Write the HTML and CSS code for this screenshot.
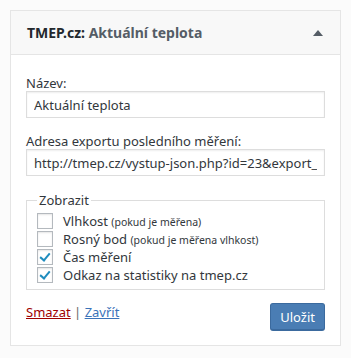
FILE: index.html
```html
<!DOCTYPE html>
<html lang="cs">
<head>
    <meta charset="UTF-8">
    <title>TMEP.cz widget</title>
    <link rel="stylesheet" href="styles.css">
</head>
<body>
    <div class="widget">
        <div class="widget-top">
            <h3 class="widget-title">TMEP.cz: <span class="in-widget-title">Aktuální teplota</span></h3>
            <span class="toggle"></span>
        </div>
        <div class="widget-inside">
            <div class="field">
                <label for="title">Název:</label>
                <input type="text" id="title" value="Aktuální teplota">
            </div>
            <div class="field">
                <label for="url">Adresa exportu posledního měření:</label>
                <input type="text" id="url" value="http://tmep.cz/vystup-json.php?id=23&amp;export_type=last">
            </div>
            <fieldset class="show">
                <legend>Zobrazit</legend>
                <label class="check"><span class="box"></span><span>Vlhkost <small>(pokud je měřena)</small></span></label>
                <label class="check"><span class="box"></span><span>Rosný bod <small>(pokud je měřena vlhkost)</small></span></label>
                <label class="check"><span class="box checked"></span><span>Čas měření</span></label>
                <label class="check"><span class="box checked"></span><span>Odkaz na statistiky na tmep.cz</span></label>
            </fieldset>
            <div class="widget-actions">
                <div class="links">
                    <a href="#" class="delete">Smazat</a> | <a href="#" class="close">Zavřít</a>
                </div>
                <button class="save">Uložit</button>
            </div>
        </div>
    </div>
</body>
</html>
```

FILE: styles.css
```css
:root {
    --background: #fbfbfb;
    --border: #e5e5e5;
    --input-border: #dddddd;
    --text: #32373c;
    --muted: #555d66;
    --blue: #4a7db4;
    --link: #3b73b9;
    --red: #a00000;
}

body {
    font-family: 'Noto Sans', 'Open Sans', sans-serif;
    font-size: 13px;
    color: var(--text);
    background-color: var(--background);
    margin: 0;
    padding: 10px;
}

.widget {
    width: 331px;
    box-sizing: border-box;
    background-color: #fff;
    border: 1px solid var(--border);
}

.widget-top {
    height: 43px;
    background-color: #f8f8f8;
    border-bottom: 1px solid var(--border);
    display: flex;
    align-items: center;
    justify-content: space-between;
    padding: 0 17px 0 16px;
}

.widget-title {
    margin: 0;
    font-size: 14px;
    font-weight: 700;
    color: #23282d;
}

.in-widget-title {
    color: var(--muted);
}

.toggle {
    width: 0;
    height: 0;
    border-left: 5px solid transparent;
    border-right: 5px solid transparent;
    border-bottom: 6px solid #555d66;
}

.widget-inside {
    padding: 20px 15px 14px;
}

.field label {
    display: block;
    line-height: 16px;
}

.field input {
    display: block;
    width: 100%;
    box-sizing: border-box;
    height: 27px;
    margin: 0 0 15px;
    padding: 0 7px;
    font-family: inherit;
    font-size: 13px;
    color: var(--text);
    border: 1px solid var(--input-border);
    box-shadow: inset 0 1px 2px rgba(0, 0, 0, 0.07);
    outline: none;
}

.show {
    margin: 14px 0 0;
    padding: 3px 10px 5px;
    border: 1px solid var(--input-border);
}

.show legend {
    padding: 0 2px;
    margin-left: 0;
}

.check {
    display: flex;
    align-items: center;
    gap: 10px;
    height: 18px;
}

.check small {
    font-size: 10.5px;
}

.box {
    width: 16px;
    height: 16px;
    box-sizing: border-box;
    border: 1px solid #b4b9be;
    box-shadow: inset 0 1px 2px rgba(0, 0, 0, 0.1);
    background-color: #fff;
    position: relative;
    flex-shrink: 0;
}

.box.checked::after {
    content: "";
    position: absolute;
    left: 4px;
    top: 1px;
    width: 4px;
    height: 8px;
    border-right: 2px solid #1e8cbe;
    border-bottom: 2px solid #1e8cbe;
    transform: rotate(40deg);
}

.widget-actions {
    display: flex;
    justify-content: space-between;
    align-items: flex-start;
    margin-top: 13px;
}

.links {
    color: #666;
    line-height: 18px;
}

.links a {
    text-decoration: underline;
}

.delete {
    color: var(--red);
}

.close {
    color: var(--link);
}

.save {
    height: 28px;
    padding: 0 9px;
    font-family: inherit;
    font-size: 13px;
    color: #fff;
    background-color: var(--blue);
    border: 1px solid #3b6a9e;
    border-bottom-width: 2px;
    border-radius: 3px;
    cursor: pointer;
}
```
